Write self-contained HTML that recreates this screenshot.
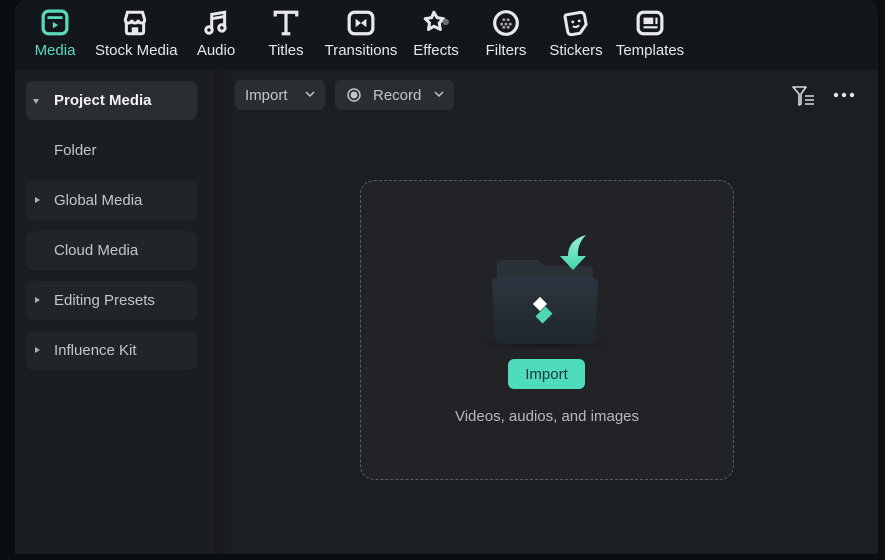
<!DOCTYPE html>
<html><head><meta charset="utf-8"><style>
*{margin:0;padding:0;box-sizing:border-box}
body{width:885px;height:560px;background:#0b0e11;font-family:"Liberation Sans",sans-serif;position:relative;overflow:hidden}
.top{position:absolute;left:15px;top:0;width:863px;height:70px;background:#13161a;border-radius:12px 12px 0 0}
.tab{position:absolute;top:0;height:70px;text-align:center;color:#e6e8ea;font-size:15px}
.tab svg{position:absolute;top:9px;left:50%;margin-left:-14px}
.tab span{position:absolute;top:42px;left:0;right:0;white-space:nowrap}
.left{position:absolute;left:15px;top:70px;width:199px;height:484px;background:#1b1e21}
.main{position:absolute;left:214px;top:70px;width:664px;height:484px;background:#1c1f22}
.shade{position:absolute;left:214px;top:70px;width:20px;height:484px;background:linear-gradient(90deg,#17191c,#1c1f22)}
.item{position:absolute;left:26px;width:171px;height:39px;border-radius:7px;background:#212428;color:#c3c6ca;font-size:15px;line-height:40px;padding-left:28px}
.item.plain{background:none}
.tri{position:absolute;left:9px;top:16px;width:0;height:0;border-left:5px solid #aab0b5;border-top:3.5px solid transparent;border-bottom:3.5px solid transparent}
.tri.down{border-top:5px solid #aab0b5;border-left:3.5px solid transparent;border-right:3.5px solid transparent;border-bottom:0;top:18px;left:7px}
.btn{position:absolute;top:80px;height:30px;border-radius:6px;background:#2a2d31;color:#c2c6ca;font-size:15px;line-height:32px}
.drop{position:absolute;left:360px;top:180px;width:374px;height:300px;border:1.5px dashed #5a5e63;border-radius:14px;background:#212326}
.imp{position:absolute;left:508px;top:359px;width:77px;height:30px;border-radius:6px;background:#4fdcbd;color:#1f3a35;font-size:15px;line-height:31px;text-align:center}
</style></head><body>
<div class="top">
 <div class="tab" style="left:14px;width:52px;color:#5ad9bb"><svg width="28" height="28" viewBox="0 0 26 26"><rect x="2" y="2" width="22" height="21" rx="5" fill="none" stroke="#5ad9bb" stroke-width="3"/><line x1="6" y1="8" x2="20" y2="8" stroke="#5ad9bb" stroke-width="2.6"/><path d="M11 12l5 3-5 3z" fill="#5ad9bb"/></svg><span>Media</span></div>
 <div class="tab" style="left:80px;width:80px"><svg width="28" height="28" viewBox="0 0 26 26"><path d="M4 10 L6 3 H20 L22 10 Q22 13 19 13 Q16 13 16 10 Q16 13 13 13 Q10 13 10 10 Q10 13 7 13 Q4 13 4 10Z M5 13 V21 Q5 23 7 23 H19 Q21 23 21 21 V13" fill="none" stroke="#e6e8ea" stroke-width="2.8"/><rect x="10" y="17" width="6" height="6" fill="#e6e8ea"/></svg><span>Stock Media</span></div>
 <div class="tab" style="left:178px;width:46px"><svg width="28" height="28" viewBox="0 0 26 26"><path d="M9 19V5L21 3V17" fill="none" stroke="#e6e8ea" stroke-width="2.8"/><line x1="9" y1="9" x2="21" y2="7" stroke="#e6e8ea" stroke-width="2.8"/><circle cx="6.5" cy="19.5" r="3" fill="none" stroke="#e6e8ea" stroke-width="2.8"/><circle cx="18.5" cy="17.5" r="3" fill="none" stroke="#e6e8ea" stroke-width="2.8"/></svg><span>Audio</span></div>
 <div class="tab" style="left:248px;width:46px"><svg width="28" height="28" viewBox="0 0 26 26"><path d="M3 7V3H23V7M13 3V23M9 23H17" fill="none" stroke="#e6e8ea" stroke-width="3"/></svg><span>Titles</span></div>
 <div class="tab" style="left:308px;width:76px"><svg width="28" height="28" viewBox="0 0 26 26"><rect x="2" y="3" width="22" height="20" rx="5" fill="none" stroke="#e6e8ea" stroke-width="3"/><path d="M8 9l5 4-5 4zM18 9l-5 4 5 4z" fill="#e6e8ea"/></svg><span>Transitions</span></div>
 <div class="tab" style="left:398px;width:46px"><svg width="28" height="28" viewBox="0 0 26 26"><path d="M11 3l3 5 6 1-4 4 1 6-6-3-5 3 1-6-4-4 6-1z" fill="none" stroke="#e6e8ea" stroke-width="2.8" stroke-linejoin="round"/><circle cx="22" cy="12" r="3" fill="#6b6f74"/></svg><span>Effects</span></div>
 <div class="tab" style="left:466px;width:50px"><svg width="28" height="28" viewBox="0 0 26 26"><circle cx="13" cy="13" r="10.5" fill="none" stroke="#e6e8ea" stroke-width="3"/><g fill="#aaa"><circle cx="11" cy="10" r="1.3"/><circle cx="15" cy="10" r="1.3"/><circle cx="9" cy="14" r="1.3"/><circle cx="13" cy="14" r="1.3"/><circle cx="17" cy="14" r="1.3"/><circle cx="11" cy="17" r="1.3"/><circle cx="15" cy="17" r="1.3"/></g></svg><span>Filters</span></div>
 <div class="tab" style="left:534px;width:54px"><svg width="28" height="28" viewBox="0 0 26 26"><path d="M5 4H18Q22 4 22 8V16L15 23H8Q4 23 4 19V5Z" fill="none" stroke="#e6e8ea" stroke-width="2.8" stroke-linejoin="round" transform="rotate(-10 13 13)"/><circle cx="10" cy="12" r="1.3" fill="#e6e8ea"/><circle cx="16" cy="11" r="1.3" fill="#e6e8ea"/><path d="M10 16q3 2 6 -1" fill="none" stroke="#e6e8ea" stroke-width="1.8"/></svg><span>Stickers</span></div>
 <div class="tab" style="left:600px;width:70px"><svg width="28" height="28" viewBox="0 0 26 26"><rect x="2" y="3" width="22" height="20" rx="5" fill="none" stroke="#e6e8ea" stroke-width="3"/><rect x="7" y="8" width="9" height="6" fill="#e6e8ea"/><rect x="18" y="8" width="2" height="6" fill="#e6e8ea"/><rect x="7" y="16" width="13" height="2" fill="#e6e8ea"/></svg><span>Templates</span></div>
</div>
<div class="left"></div>
<div class="main"></div>
<div class="shade"></div>
<div class="item" style="top:81px;background:#2a2d31;color:#f2f3f4;font-weight:bold"><i class="tri down"></i>Project Media</div>
<div class="item plain" style="top:131px">Folder</div>
<div class="item" style="top:181px"><i class="tri"></i>Global Media</div>
<div class="item" style="top:231px">Cloud Media</div>
<div class="item" style="top:281px"><i class="tri"></i>Editing Presets</div>
<div class="item" style="top:331px"><i class="tri"></i>Influence Kit</div>
<div class="btn" style="left:235px;width:90px;padding-left:10px">Import<svg style="position:absolute;left:70px;top:11px" width="10" height="7" viewBox="0 0 10 7"><path d="M1 1l4 4 4-4" fill="none" stroke="#c2c6ca" stroke-width="1.5"/></svg></div>
<div class="btn" style="left:335px;width:119px;padding-left:38px"><svg style="position:absolute;left:12px;top:8px" width="14" height="14" viewBox="0 0 14 14"><circle cx="7" cy="7" r="6" fill="none" stroke="#c2c6ca" stroke-width="1.5"/><circle cx="7" cy="7" r="3.5" fill="#c2c6ca"/></svg>Record<svg style="position:absolute;left:99px;top:11px" width="10" height="7" viewBox="0 0 10 7"><path d="M1 1l4 4 4-4" fill="none" stroke="#c2c6ca" stroke-width="1.5"/></svg></div>
<svg style="position:absolute;left:792px;top:85px" width="24" height="22" viewBox="0 0 24 22"><path d="M1 2H14L9 9V19L7 20V9Z" fill="none" stroke="#d8dadc" stroke-width="1.6" stroke-linejoin="round"/><path d="M13 11H22M13 15H22M13 19H22" stroke="#d8dadc" stroke-width="1.6"/></svg>
<svg style="position:absolute;left:833px;top:92px" width="22" height="6"><circle cx="3" cy="3" r="2.2" fill="#e0e2e4"/><circle cx="11" cy="3" r="2.2" fill="#e0e2e4"/><circle cx="19" cy="3" r="2.2" fill="#e0e2e4"/></svg>
<div class="drop"></div>
<svg style="position:absolute;left:460px;top:230px" width="170" height="125" viewBox="0 0 170 125">
 <defs><linearGradient id="g" x1="0" y1="0" x2="0" y2="1"><stop offset="0" stop-color="#9af0d8"/><stop offset="1" stop-color="#3fd6a8"/></linearGradient>
 <linearGradient id="f" x1="0" y1="0" x2="0" y2="1"><stop offset="0" stop-color="#2c3640"/><stop offset="1" stop-color="#1f262c"/></linearGradient>
 <radialGradient id="sh"><stop offset="0" stop-color="#111" stop-opacity=".8"/><stop offset="1" stop-color="#111" stop-opacity="0"/></radialGradient></defs>
 <ellipse cx="85" cy="114" rx="70" ry="6" fill="url(#sh)"/>
 <path d="M37 36Q37 30 43 30H78L84 36H127Q133 36 133 42V50H37Z" fill="#2a3238"/>
 <path d="M32 54Q32 48 38 48H132Q138 48 138 54L135 108Q135 114 129 114H41Q35 114 35 108Z" fill="url(#f)"/>
 <rect x="75" y="69" width="10" height="10" fill="#fff" transform="rotate(45 80 74)"/>
 <rect x="77" y="80" width="14" height="10" fill="#4fd6b5" transform="rotate(-45 84 85)"/>
 <path d="M126 5Q108 10 108 26H100L113 40L126 26H118Q117 14 126 5Z" fill="url(#g)"/>
</svg>
<div class="imp">Import</div>
<div style="position:absolute;left:360px;width:374px;top:408px;text-align:center;color:#b6babe;font-size:15px">Videos, audios, and images</div>
</body></html>
